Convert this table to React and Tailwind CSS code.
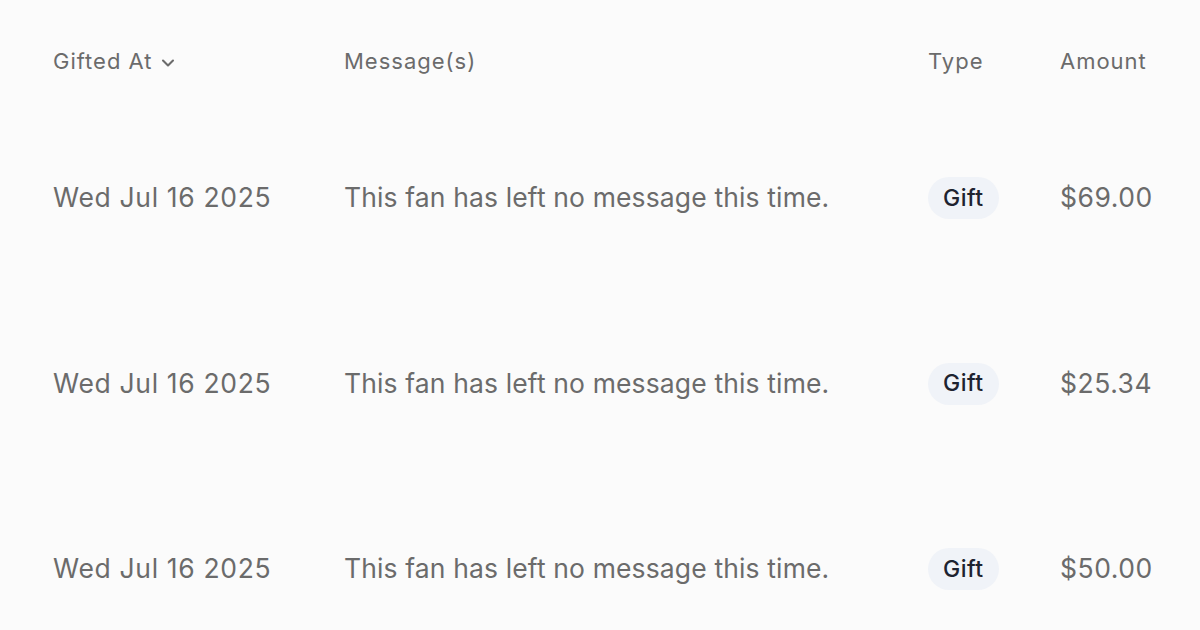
import { ChevronDown } from "lucide-react";

const rows = [
  { date: "Wed Jul 16 2025", message: "This fan has left no message this time.", type: "Gift", amount: "$69.00" },
  { date: "Wed Jul 16 2025", message: "This fan has left no message this time.", type: "Gift", amount: "$25.34" },
  { date: "Wed Jul 16 2025", message: "This fan has left no message this time.", type: "Gift", amount: "$50.00" },
];

export default function App() {
  return (
    <div className="w-[1200px] h-[630px] overflow-hidden bg-[#fbfbfb] font-['Inter',sans-serif] text-[#6b6b6b]">
      <div className="grid grid-cols-[291px_584px_132px_1fr] pl-[53px] pt-[45px] h-[28px] box-content items-center text-[22px] tracking-[0.045em]">
        <div className="flex items-center gap-[6px]">
          Gifted At
          <ChevronDown className="w-[20px] h-[20px] mt-[3px]" strokeWidth={2.5} />
        </div>
        <div>Message(s)</div>
        <div>Type</div>
        <div>Amount</div>
      </div>
      <div className="pt-[103px]">
        {rows.map((r, i) => (
          <div
            key={i}
            className="grid grid-cols-[291px_584px_132px_1fr] pl-[53px] h-[185.5px] items-start text-[26.5px] tracking-[0.005em]"
          >
            <div className="h-[44px] flex items-center tracking-[0.025em]">{r.date}</div>
            <div className="h-[44px] flex items-center">{r.message}</div>
            <div className="h-[44px] flex items-center">
              <span className="h-[42px] px-[15px] flex items-center rounded-full bg-[#f0f3f8] text-[#1e2330] text-[23px] font-medium tracking-[0.02em]">
                {r.type}
              </span>
            </div>
            <div className="h-[44px] flex items-center tracking-[0.02em]">{r.amount}</div>
          </div>
        ))}
      </div>
    </div>
  );
}
